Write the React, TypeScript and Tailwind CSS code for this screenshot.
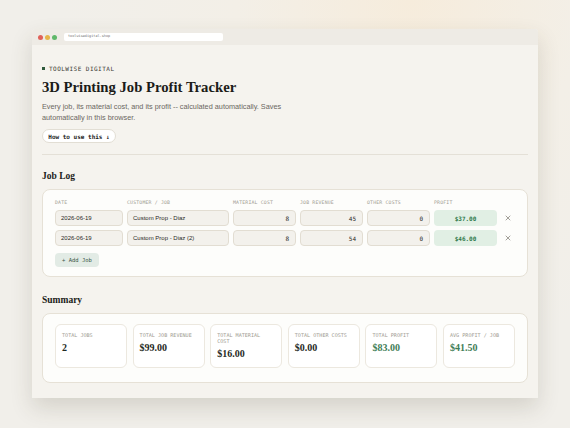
const serif = "font-['Liberation_Serif',serif]";
const sans = "font-['Liberation_Sans',Arial,sans-serif]";
const mono = "font-['DejaVu_Sans_Mono',monospace]";

type Job = {
  date: string;
  name: string;
  material: number;
  revenue: number;
  other: number;
};

const jobs: Job[] = [
  { date: "2026-06-19", name: "Custom Prop - Diaz", material: 8, revenue: 45, other: 0 },
  { date: "2026-06-19", name: "Custom Prop - Diaz (2)", material: 8, revenue: 54, other: 0 },
];

const money = (n: number) => `$${n.toFixed(2)}`;

export default function App() {
  const totalMaterial = jobs.reduce((s, j) => s + j.material, 0);
  const totalRevenue = jobs.reduce((s, j) => s + j.revenue, 0);
  const totalOther = jobs.reduce((s, j) => s + j.other, 0);
  const totalProfit = totalRevenue - totalMaterial - totalOther;

  const stats = [
    { label: "Total jobs", value: String(jobs.length) },
    { label: "Total job revenue", value: money(totalRevenue) },
    { label: "Total material cost", value: money(totalMaterial) },
    { label: "Total other costs", value: money(totalOther) },
    { label: "Total profit", value: money(totalProfit), good: true },
    { label: "Avg profit / job", value: money(totalProfit / jobs.length), good: true },
  ];

  return (
    <div className="h-[428px] w-[570px] overflow-hidden bg-[radial-gradient(ellipse_at_72%_0%,#f6ecdc_0%,#f3efe7_30%,#f1efea_60%)] pl-[32px] pt-[29px]">
      <div className="flex h-[369px] w-[506px] flex-col overflow-hidden rounded-t-[3px] bg-[#f5f3ee] shadow-[0_10px_22px_rgba(70,60,40,0.16)]">
        {/* title bar */}
        <div className="flex h-[16px] shrink-0 items-center bg-[#eeebe5] pl-[6px]">
          <div className="flex gap-[2px]">
            <span className="h-[5px] w-[5px] rounded-full bg-[#e0625a]" />
            <span className="h-[5px] w-[5px] rounded-full bg-[#e6b54a]" />
            <span className="h-[5px] w-[5px] rounded-full bg-[#5fb86a]" />
          </div>
          <div className={`ml-[7px] flex h-[8px] w-[159px] items-center rounded-[2px] bg-white pl-[4px] text-[3.5px] text-[#777] ${mono}`}>
            toolwisedigital.shop
          </div>
        </div>

        <div className="flex-1 px-[10px] pt-[19px]">
          <p className={`flex h-[8px] items-center gap-[4px] text-[6px] uppercase tracking-[0.08em] text-[#3a3a34] ${mono}`}>
            <span className="h-[3px] w-[3px] bg-[#2f5a3c]" />
            Toolwise Digital
          </p>
          <h1 className={`mt-[6px] text-[14.7px] font-bold leading-[18px] text-[#1b1b18] ${serif}`}>
            3D Printing Job Profit Tracker
          </h1>
          <p className={`mt-[5px] w-[250px] text-[7.3px] leading-[11px] text-[#6b675f] ${sans}`}>
            Every job, its material cost, and its profit -- calculated automatically. Saves
            automatically in this browser.
          </p>
          <button
            className={`mt-[6px] flex h-[14px] w-[74px] items-center justify-center rounded-full border border-[#e2ded4] bg-white text-[6px] font-bold text-[#222] ${mono}`}
          >
            How to use this ↓
          </button>

          <div className="mt-[11px] h-px bg-[#e4e0d7]" />

          <h2 className={`mt-[15px] text-[9.5px] font-bold leading-[12px] text-[#1b1b18] ${serif}`}>Job Log</h2>
          <div className="mt-[7px] rounded-[8px] border border-[#e6e1d6] bg-[#fdfdfb] px-[12px] pb-[9px] pt-[10px]">
            <div className={`grid grid-cols-[68px_102px_63px_63px_63px_63px_14px] gap-x-[4px] text-[4.8px] uppercase leading-[6px] tracking-[0.04em] text-[#a09b91] ${mono}`}>
              <span>Date</span>
              <span>Customer / Job</span>
              <span>Material cost</span>
              <span>Job revenue</span>
              <span>Other costs</span>
              <span>Profit</span>
              <span />
            </div>
            <div className="mt-[4px] flex flex-col gap-[4px]">
              {jobs.map((job, i) => (
                <JobRow key={i} job={job} />
              ))}
            </div>
            <button
              className={`mt-[7px] flex h-[14px] w-[44px] items-center justify-center rounded-[4px] bg-[#e2ebe5] text-[5.5px] text-[#3b5646] ${mono}`}
            >
              + Add Job
            </button>
          </div>

          <h2 className={`mt-[17px] text-[9.5px] font-bold leading-[12px] text-[#1b1b18] ${serif}`}>Summary</h2>
          <div className="mt-[7px] rounded-[8px] border border-[#e6e1d6] bg-[#fdfdfb] px-[12px] pb-[14px] pt-[10px]">
            <div className="grid grid-cols-6 gap-[5.6px]">
              {stats.map((s) => (
                <div key={s.label} className="rounded-[6px] border border-[#ece8df] bg-white px-[6px] pb-[7px] pt-[7px]">
                  <p className={`text-[5.1px] uppercase leading-[6px] text-[#a09b91] ${mono}`}>{s.label}</p>
                  <p
                    className={`mt-[4px] text-[10px] font-bold leading-[12px] ${serif} ${
                      s.good ? "text-[#3f7d57]" : "text-[#1f2a24]"
                    }`}
                  >
                    {s.value}
                  </p>
                </div>
              ))}
            </div>
          </div>

          <div className="mt-[15px] flex justify-end gap-[3px] pr-[2px]">
            <button className="h-[20px] w-[63px] rounded-[5px] border border-[#e4e0d6] bg-[#f7f6f2]" />
            <button className="h-[20px] w-[66px] rounded-[5px] border border-[#e4e0d6] bg-[#f7f6f2]" />
          </div>
        </div>
      </div>
    </div>
  );
}

function JobRow({ job }: { job: Job }) {
  const profit = job.revenue - job.material - job.other;
  const field = "flex h-[16px] items-center rounded-[4px] border border-[#e2ddd2] bg-[#f3f1ec] text-[6px] text-[#2a2a26]";
  return (
    <div className="grid grid-cols-[68px_102px_63px_63px_63px_63px_14px] items-center gap-x-[4px]">
      <div className={`${field} pl-[5px] ${sans}`}>{job.date}</div>
      <div className={`${field} pl-[5px] ${sans}`}>{job.name}</div>
      <div className={`${field} justify-end pr-[6px] ${mono}`}>{job.material}</div>
      <div className={`${field} justify-end pr-[6px] ${mono}`}>{job.revenue}</div>
      <div className={`${field} justify-end pr-[6px] ${mono}`}>{job.other}</div>
      <div className={`flex h-[16px] items-center justify-center rounded-[4px] bg-[#e1efe4] text-[6px] font-bold text-[#2f7a4b] ${mono}`}>
        {money(profit)}
      </div>
      <span className="flex items-center justify-center">
        <svg width="6" height="6" viewBox="0 0 6 6" fill="none" stroke="#8c8880" strokeWidth="0.8" strokeLinecap="round">
          <path d="M1 1L5 5M5 1L1 5" />
        </svg>
      </span>
    </div>
  );
}
